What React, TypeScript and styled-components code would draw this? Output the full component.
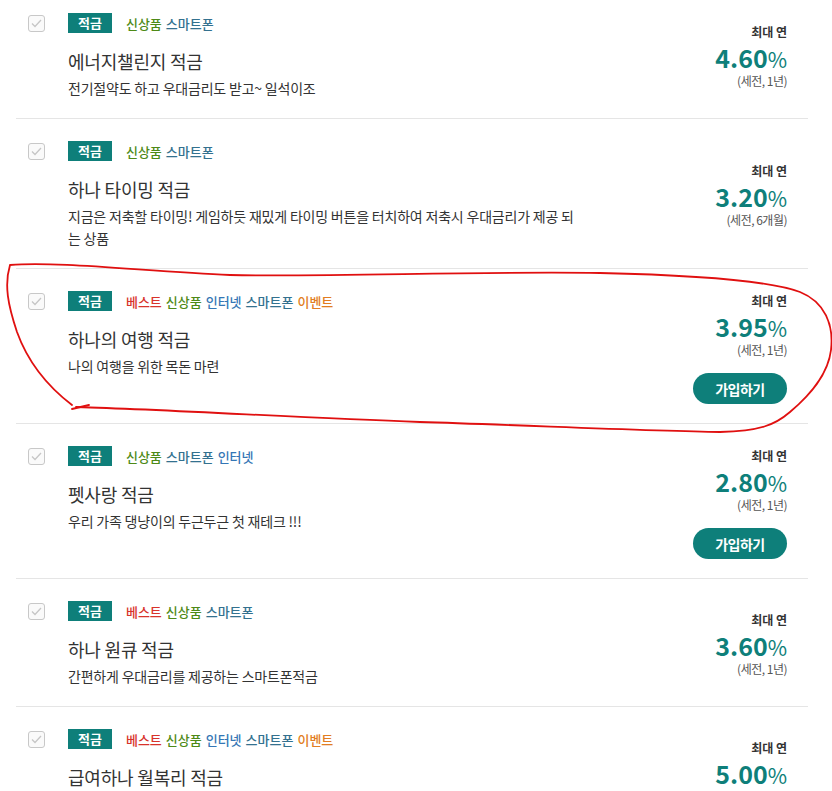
import * as React from "react"
import styled, { createGlobalStyle } from "styled-components"

const GlobalStyle = createGlobalStyle`
    html, body {
        margin: 0;
        padding: 0;
        background: #ffffff;
        overflow: hidden;
    }
    body {
        font-family: "Noto Sans CJK KR", "Noto Sans", sans-serif;
        color: #333333;
    }
`

const TEAL = "#0e7f7a"

type Badge = "베스트" | "신상품" | "인터넷" | "스마트폰" | "이벤트"

const BADGE_COLORS: Record<Badge, string> = {
    베스트: "#d8332b",
    신상품: "#4e8a17",
    인터넷: "#3476b5",
    스마트폰: "#33718f",
    이벤트: "#e27d22",
}

interface IProduct {
    name: string
    badges: Badge[]
    desc: string
    rate: string
    term: string
    canJoin?: boolean
}

const PRODUCTS: IProduct[] = [
    {
        name: "에너지챌린지 적금",
        badges: ["신상품", "스마트폰"],
        desc: "전기절약도 하고 우대금리도 받고~ 일석이조",
        rate: "4.60",
        term: "(세전, 1년)",
    },
    {
        name: "하나 타이밍 적금",
        badges: ["신상품", "스마트폰"],
        desc: "지금은 저축할 타이밍! 게임하듯 재밌게 타이밍 버튼을 터치하여 저축시 우대금리가 제공 되는 상품",
        rate: "3.20",
        term: "(세전, 6개월)",
    },
    {
        name: "하나의 여행 적금",
        badges: ["베스트", "신상품", "인터넷", "스마트폰", "이벤트"],
        desc: "나의 여행을 위한 목돈 마련",
        rate: "3.95",
        term: "(세전, 1년)",
        canJoin: true,
    },
    {
        name: "펫사랑 적금",
        badges: ["신상품", "스마트폰", "인터넷"],
        desc: "우리 가족 댕냥이의 두근두근 첫 재테크 !!!",
        rate: "2.80",
        term: "(세전, 1년)",
        canJoin: true,
    },
    {
        name: "하나 원큐 적금",
        badges: ["베스트", "신상품", "스마트폰"],
        desc: "간편하게 우대금리를 제공하는 스마트폰적금",
        rate: "3.60",
        term: "(세전, 1년)",
    },
    {
        name: "급여하나 월복리 적금",
        badges: ["베스트", "신상품", "인터넷", "스마트폰", "이벤트"],
        desc: "급여이체하고 월복리로 목돈 만들기",
        rate: "5.00",
        term: "(세전, 1년)",
    },
]

const Page = styled.div`
    position: relative;
    width: 832px;
    height: 791px;
    overflow: hidden;
`

// the list is scrolled a little, the first row's top is cut off
const List = styled.ul`
    list-style: none;
    margin: -9px 0 0 16px;
    padding: 0;
    width: 792px;
`

const Row = styled.li`
    display: flex;
    padding: 22px 21px 19px 12px;
    border-bottom: 1px solid #e5e5e5;
`

const CheckCol = styled.div`
    flex: 0 0 auto;
    padding-top: 2px;
    margin-right: 23px;
`

const CheckBox = styled.span`
    display: flex;
    align-items: center;
    justify-content: center;
    width: 15px;
    height: 15px;
    border: 1px solid #c8c8c8;
    border-radius: 3px;
    background: #fafafa;
`

const Info = styled.div`
    flex: 1 1 auto;
    min-width: 0;
`

const TagLine = styled.div`
    display: flex;
    align-items: center;
    height: 20px;
`

const Category = styled.span`
    height: 20px;
    line-height: 20px;
    padding: 0 10px;
    margin-right: 14px;
    background: ${TEAL};
    color: #ffffff;
    font-size: 13px;
    font-weight: 700;
`

const BadgeText = styled.span<{ $color: string }>`
    margin-right: 4px;
    color: ${p => p.$color};
    font-size: 13px;
    font-weight: 500;
`

const Title = styled.div`
    margin-top: 15px;
    font-size: 18px;
    line-height: 26px;
    letter-spacing: -0.2px;
    color: #333333;
`

const Desc = styled.div`
    margin-top: 3px;
    max-width: 512px;
    font-size: 14px;
    line-height: 22px;
    letter-spacing: -0.2px;
    color: #333333;
`

const RateBox = styled.div`
    flex: 0 0 auto;
    align-self: center;
    display: flex;
    flex-direction: column;
    align-items: flex-end;
`

const RateLabel = styled.div`
    font-size: 12px;
    line-height: 20px;
    font-weight: 700;
    color: #333333;
`

const Rate = styled.div`
    display: flex;
    align-items: baseline;
    height: 30px;
    line-height: 30px;
    color: ${TEAL};
    white-space: nowrap;

    .num {
        font-size: 25px;
        font-weight: 700;
    }

    .pct {
        font-size: 21px;
        font-weight: 400;
    }
`

const Term = styled.div`
    font-size: 12px;
    line-height: 18px;
    letter-spacing: -0.5px;
    color: #555555;
`

const JoinButton = styled.button`
    margin-top: 14px;
    width: 94px;
    height: 31px;
    padding: 0;
    border: none;
    border-radius: 16px;
    background: ${TEAL};
    color: #ffffff;
    font-family: inherit;
    font-size: 14px;
    font-weight: 700;
    letter-spacing: -0.5px;
`

// hand-drawn red annotation around the third product
const Annotation = styled.svg`
    position: absolute;
    top: 0;
    left: 0;
    pointer-events: none;
`

const CheckMark = () => (
    <svg width="11" height="9" viewBox="0 0 11 9">
        <polyline points="1,4.5 4,7.5 10,1" fill="none" stroke="#c6c6c6" strokeWidth="1.3" />
    </svg>
)

const ProductRow = ({ product }: { product: IProduct }) => (
    <Row>
        <CheckCol>
            <CheckBox>
                <CheckMark />
            </CheckBox>
        </CheckCol>
        <Info>
            <TagLine>
                <Category>적금</Category>
                {product.badges.map(b => (
                    <BadgeText key={b} $color={BADGE_COLORS[b]}>
                        {b}
                    </BadgeText>
                ))}
            </TagLine>
            <Title>{product.name}</Title>
            <Desc>{product.desc}</Desc>
        </Info>
        <RateBox>
            <RateLabel>최대 연</RateLabel>
            <Rate>
                <span className="num">{product.rate}</span>
                <span className="pct">%</span>
            </Rate>
            <Term>{product.term}</Term>
            {product.canJoin ? <JoinButton>가입하기</JoinButton> : null}
        </RateBox>
    </Row>
)

export default function App() {
    return (
        <Page>
            <GlobalStyle />
            <List>
                {PRODUCTS.map(p => (
                    <ProductRow key={p.name} product={p} />
                ))}
            </List>
            <Annotation width="832" height="791" viewBox="0 0 832 791">
                <path
                    d="M 72 405 C 55 392, 30 368, 17 332 C 8 305, 4 285, 10 265 C 60 261, 150 272, 230 275 C 330 277, 480 271, 600 273 C 690 275, 770 281, 800 292 C 825 302, 834 325, 831 350 C 828 375, 810 395, 790 412 C 775 425, 760 431, 720 432 C 650 431, 520 425, 420 422 C 300 418, 180 410, 76 407"
                    fill="none"
                    stroke="#e01010"
                    strokeWidth="1.8"
                    strokeLinecap="round"
                />
                <path d="M 72 409 L 89 405" fill="none" stroke="#e01010" strokeWidth="1.8" strokeLinecap="round" />
            </Annotation>
        </Page>
    )
}
